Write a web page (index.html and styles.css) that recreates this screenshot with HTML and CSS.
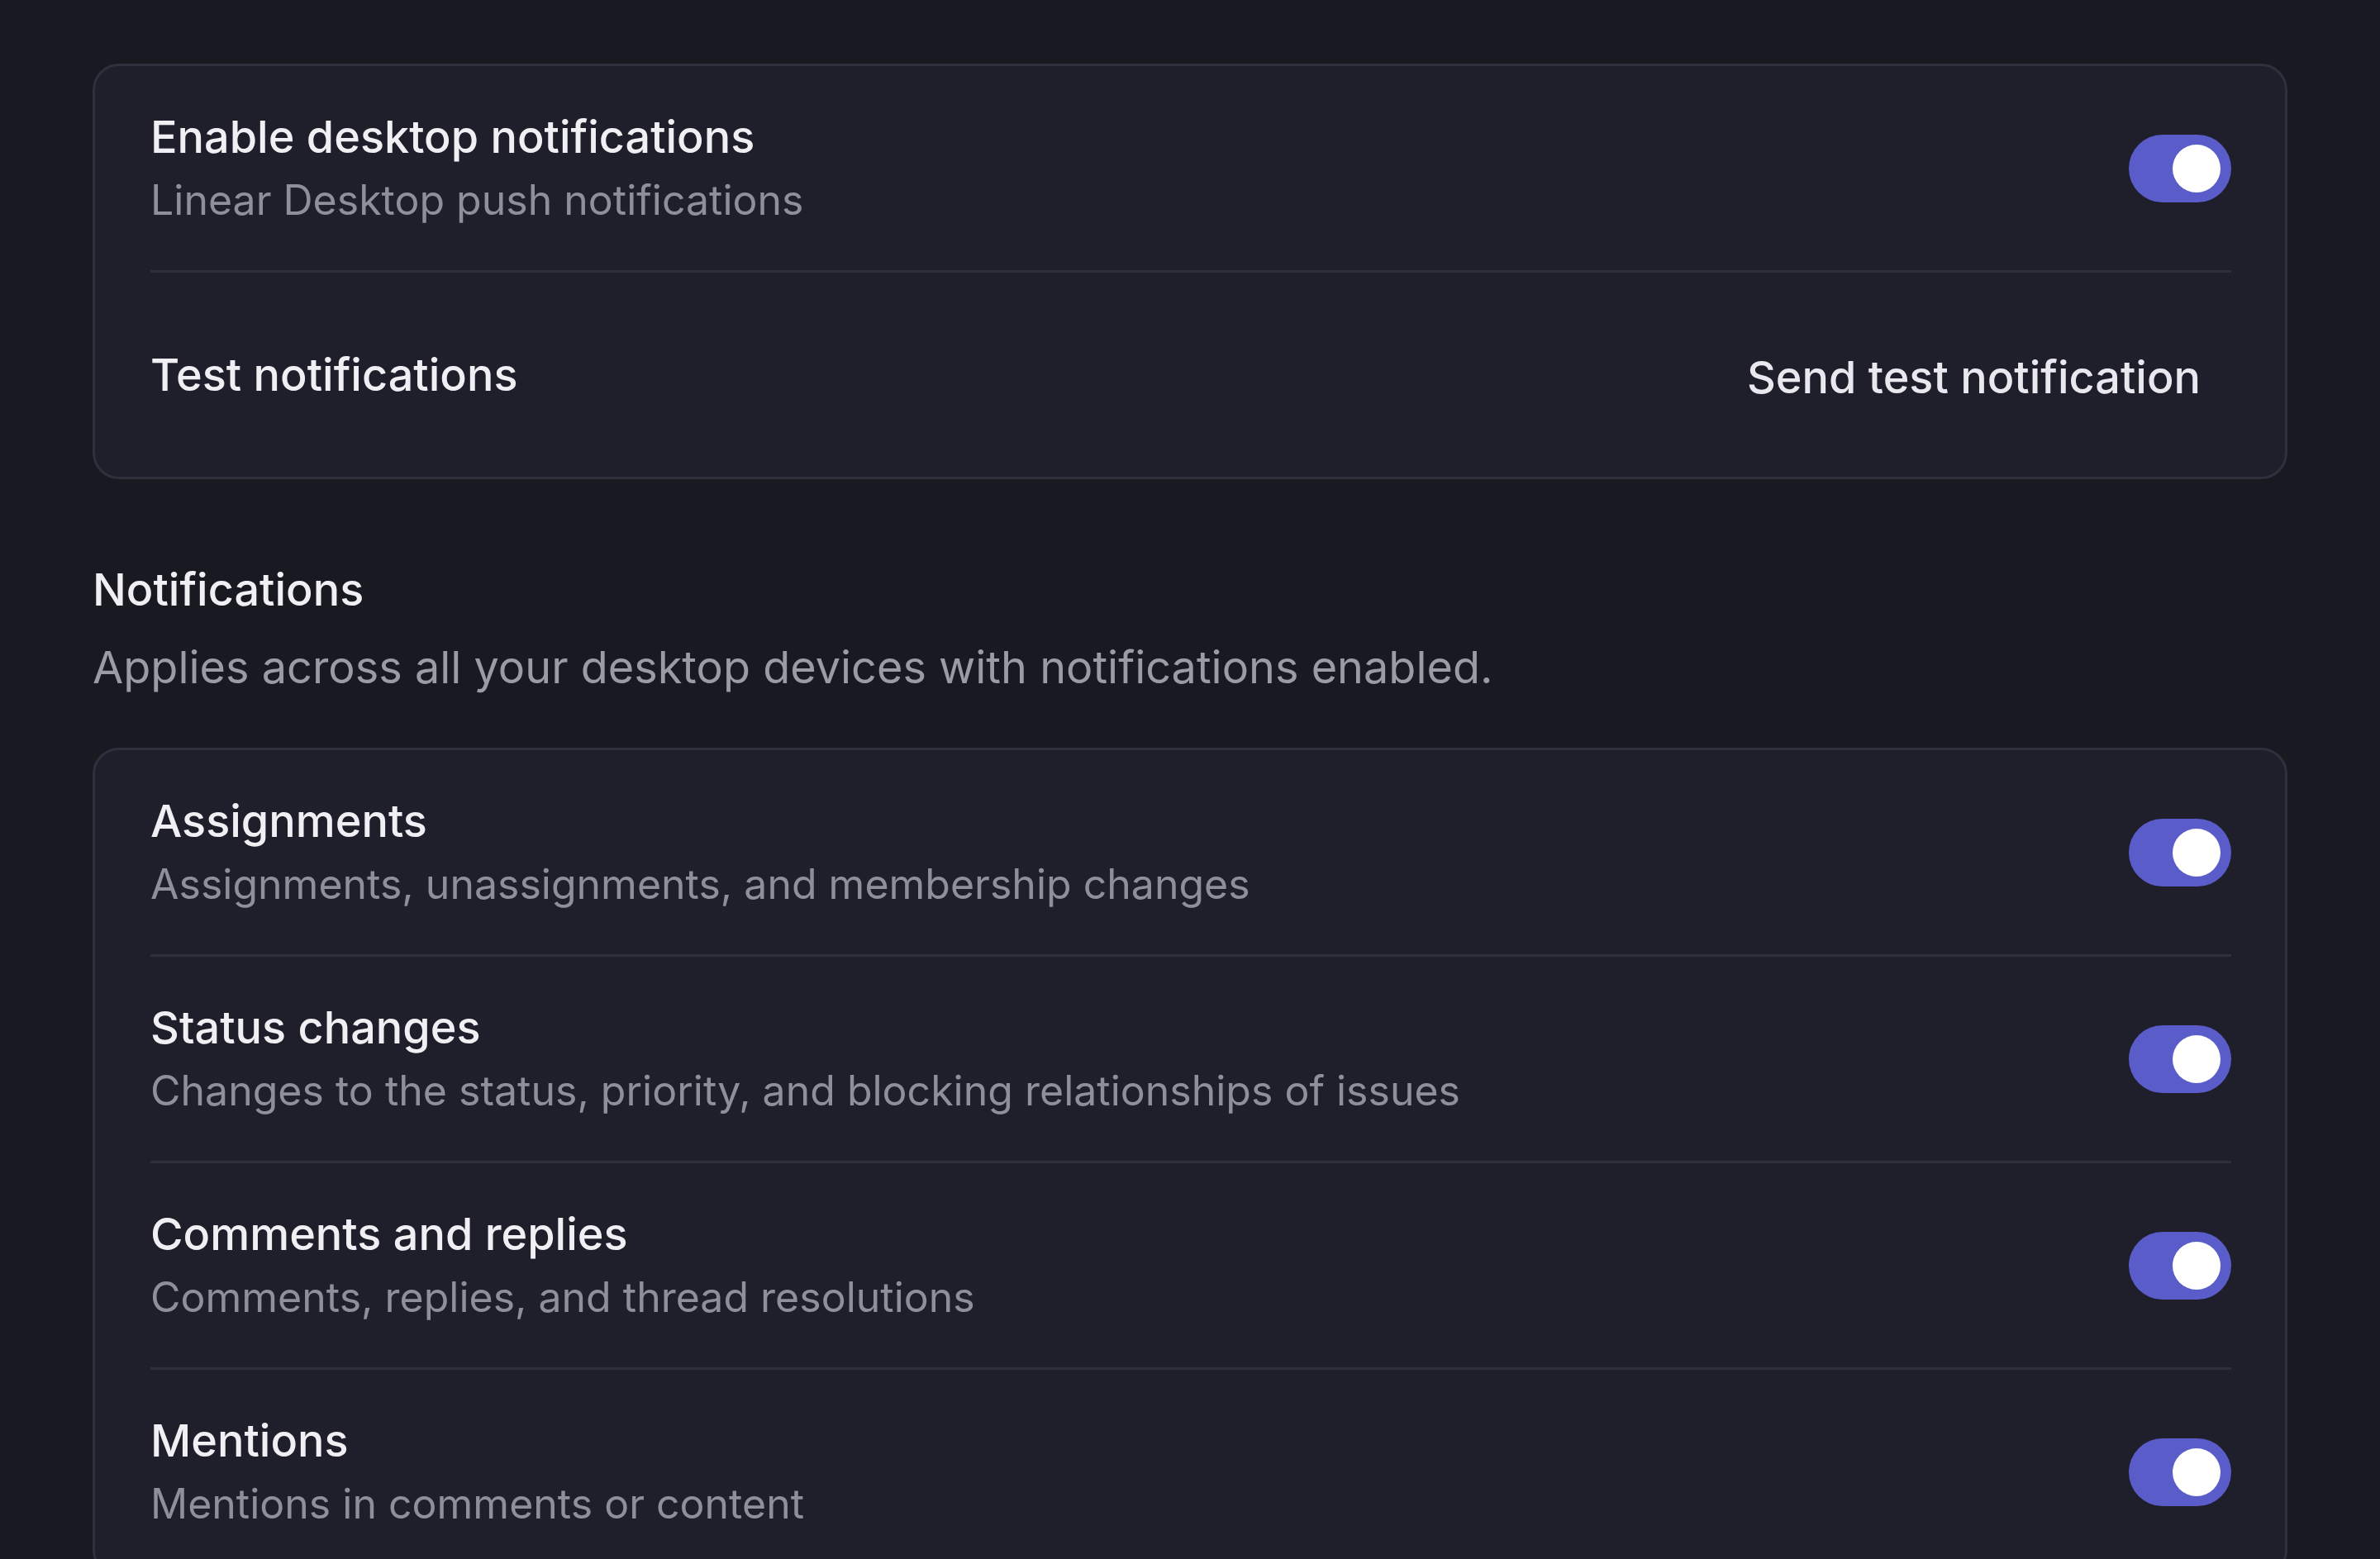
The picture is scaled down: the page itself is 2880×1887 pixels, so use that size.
FILE: index.html
```html
<!DOCTYPE html>
<html>
<head>
<meta charset="utf-8">
<link rel="stylesheet" href="styles.css">
</head>
<body>
<main class="page">
  <section class="card">
    <div class="row">
      <div class="text">
        <div class="title">Enable desktop notifications</div>
        <div class="sub">Linear Desktop push notifications</div>
      </div>
      <span class="toggle"><span class="knob"></span></span>
    </div>
    <div class="row">
      <div class="text">
        <div class="title">Test notifications</div>
      </div>
      <button class="btn">Send test notification</button>
    </div>
  </section>

  <header class="section-head">
    <h2 class="heading">Notifications</h2>
    <p class="desc">Applies across all your desktop devices with notifications enabled.</p>
  </header>

  <section class="card card-open">
    <div class="row">
      <div class="text">
        <div class="title">Assignments</div>
        <div class="sub">Assignments, unassignments, and membership changes</div>
      </div>
      <span class="toggle"><span class="knob"></span></span>
    </div>
    <div class="row">
      <div class="text">
        <div class="title">Status changes</div>
        <div class="sub">Changes to the status, priority, and blocking relationships of issues</div>
      </div>
      <span class="toggle"><span class="knob"></span></span>
    </div>
    <div class="row">
      <div class="text">
        <div class="title">Comments and replies</div>
        <div class="sub">Comments, replies, and thread resolutions</div>
      </div>
      <span class="toggle"><span class="knob"></span></span>
    </div>
    <div class="row">
      <div class="text">
        <div class="title">Mentions</div>
        <div class="sub">Mentions in comments or content</div>
      </div>
      <span class="toggle"><span class="knob"></span></span>
    </div>
  </section>
</main>
</body>
</html>
```

FILE: styles.css
```css
html, body {
  margin: 0;
  padding: 0;
  background: #191922;
  height: 100%;
  overflow: hidden;
}

body {
  font-family: Inter, "Noto Sans", sans-serif;
  color: #eeeff3;
}

.page {
  padding: 77px 112px 0 112px;
  width: 2656px;
}

.card {
  background: #1f1f2b;
  border: 3px solid #2f303c;
  border-radius: 32px;
  padding: 0 65px 0 67px;
}

.row {
  height: 247px;
  display: flex;
  align-items: center;
  justify-content: space-between;
  border-bottom: 3px solid #2e2f3a;
}

.row:last-child {
  border-bottom: none;
}

.text {
  display: flex;
  flex-direction: column;
}

.title {
  font-size: 54px;
  font-weight: 500;
  line-height: 76px;
  color: #f0f0f4;
}

.sub {
  font-size: 50px;
  font-weight: 400;
  line-height: 76px;
  color: #8e8f9a;
}

.toggle {
  width: 124px;
  height: 82px;
  border-radius: 41px;
  background: #5a5cc9;
  display: flex;
  align-items: center;
  justify-content: flex-end;
  padding-right: 13px;
  box-sizing: border-box;
}

.knob {
  width: 58px;
  height: 58px;
  border-radius: 50%;
  background: #ffffff;
}

.btn {
  font-family: Inter, "Noto Sans", sans-serif;
  font-size: 54px;
  font-weight: 500;
  color: #e8e8ee;
  background: transparent;
  border: none;
  padding: 0 37px 0 0;
  height: 82px;
  margin-top: 6px;
}

.section-head {
  padding: 96px 0 59px 0;
}

.heading {
  margin: 0;
  font-size: 54px;
  font-weight: 500;
  line-height: 76px;
  color: #f0f0f4;
}

.desc {
  margin: 18px 0 0 0;
  font-size: 54px;
  font-weight: 400;
  line-height: 76px;
  color: #9a9ba5;
}
```
